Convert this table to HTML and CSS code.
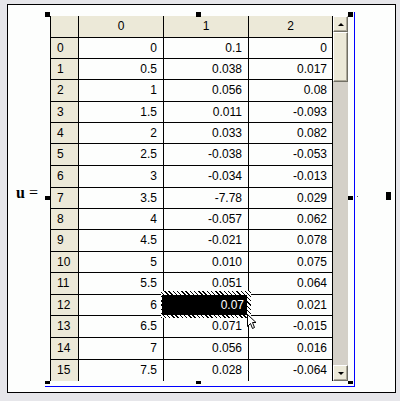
FILE: index.html
```html
<!DOCTYPE html>
<html>
<head>
<meta charset="utf-8">
<link rel="stylesheet" href="styles.css">
</head>
<body>
<div class="panel">
  <div class="label"><b>u</b> =</div>
  <div class="region">
    <span class="h h-tl"></span><span class="h h-tc"></span><span class="h h-tr"></span>
    <span class="h h-ml"></span><span class="h h-mr"></span>
    <span class="h h-b h-bl"></span><span class="h h-b h-bc"></span><span class="h h-b h-br"></span>
    <div class="widget">
      <div class="sheet">
        <div class="c hd"></div><div class="c hd">0</div><div class="c hd">1</div><div class="c hd">2</div>
        <div class="c rh">0</div><div class="c">0</div><div class="c">0.1</div><div class="c c2">0</div>
        <div class="c rh">1</div><div class="c">0.5</div><div class="c">0.038</div><div class="c c2">0.017</div>
        <div class="c rh">2</div><div class="c">1</div><div class="c">0.056</div><div class="c c2">0.08</div>
        <div class="c rh">3</div><div class="c">1.5</div><div class="c">0.011</div><div class="c c2">-0.093</div>
        <div class="c rh">4</div><div class="c">2</div><div class="c">0.033</div><div class="c c2">0.082</div>
        <div class="c rh">5</div><div class="c">2.5</div><div class="c">-0.038</div><div class="c c2">-0.053</div>
        <div class="c rh">6</div><div class="c">3</div><div class="c">-0.034</div><div class="c c2">-0.013</div>
        <div class="c rh">7</div><div class="c">3.5</div><div class="c">-7.78</div><div class="c c2">0.029</div>
        <div class="c rh">8</div><div class="c">4</div><div class="c">-0.057</div><div class="c c2">0.062</div>
        <div class="c rh">9</div><div class="c">4.5</div><div class="c">-0.021</div><div class="c c2">0.078</div>
        <div class="c rh">10</div><div class="c">5</div><div class="c">0.010</div><div class="c c2">0.075</div>
        <div class="c rh">11</div><div class="c">5.5</div><div class="c">0.051</div><div class="c c2">0.064</div>
        <div class="c rh">12</div><div class="c">6</div><div class="c cur"><div class="sel"><div class="sel-in">0.07</div></div><svg class="cursor" width="10" height="17" viewBox="0 0 10 17"><path d="M0.5 0.5 L0.5 12.5 L3.5 9.5 L5.5 14.5 L7.5 13.5 L5.5 8.5 L9 8.5 Z" fill="#fff" stroke="#000" stroke-width="1"/></svg></div><div class="c c2">0.021</div>
        <div class="c rh">13</div><div class="c">6.5</div><div class="c">0.071</div><div class="c c2">-0.015</div>
        <div class="c rh">14</div><div class="c">7</div><div class="c">0.056</div><div class="c c2">0.016</div>
        <div class="c rh">15</div><div class="c">7.5</div><div class="c">0.028</div><div class="c c2">-0.064</div>
      </div>
      <div class="scroll">
        <div class="sb-btn"><span class="arr-up"></span></div>
        <div class="thumb"></div>
        <div class="track"></div>
        <div class="sb-btn"><span class="arr-down"></span></div>
      </div>
    </div>
  </div>
  <span class="dot"></span>
  <span class="mark"></span>
</div>
</body>
</html>
```
FILE: styles.css
```css
html, body {
  margin: 0;
  padding: 0;
}
body {
  background: #e6e6ea;
  width: 400px;
  height: 401px;
  overflow: hidden;
}
.panel {
  margin: 4px 0 0 7px;
  width: 387px;
  height: 387px;
  border: 1px solid #000;
  background: #fdfefd;
  position: relative;
  display: flex;
  align-items: flex-start;
}
.label {
  margin: 179px 0 0 8px;
  width: 29px;
  font: 16px/18px "Liberation Serif", serif;
  color: #000;
  white-space: nowrap;
}
.region {
  position: relative;
  margin-top: 7px;
  padding: 4px 6px 5px 5px;
  border-right: 1px solid #0000ff;
  border-bottom: 1px solid #0000ff;
}
.h {
  position: absolute;
  width: 5px;
  height: 5px;
  background: #000;
  z-index: 3;
}
.h-tl { left: 0; top: 0; }
.h-tc { left: 151px; top: 0; }
.h-tr { left: 303px; top: 0; }
.h-ml { left: 0; top: 184px; height: 4px; }
.h-mr { left: 303px; top: 184px; height: 4px; }
.h-b { top: 369px; height: 3px; }
.h-bl { left: 0; }
.h-bc { left: 151px; }
.h-br { left: 303px; }
.widget {
  display: flex;
  width: 298px;
  height: 365px;
}
.sheet {
  display: grid;
  grid-template-columns: 28px 85px 85px 84px;
  grid-template-rows: 22px 21px 21px 22px 21px 21px 22px 22px 21px 21px 22px 21px 22px 21px 22px 22px 22px;
  border-left: 1px solid #000;
  height: 365px;
  overflow: hidden;
  font: 12px/20px "Liberation Sans", Arial, sans-serif;
  color: #000;
  background: #fdfefd;
}
.c {
  box-sizing: border-box;
  border-right: 1px solid #000;
  border-bottom: 1px solid #000;
  text-align: right;
  padding-right: 6px;
  white-space: nowrap;
}
.c2 { padding-right: 5px; }
.hd {
  background: #ece9d8;
  text-align: center;
  padding: 0;
}
.rh {
  background: #ece9d8;
  text-align: left;
  padding: 0 0 0 6px;
}
.cur {
  position: relative;
}
.sel {
  position: absolute;
  left: -3px;
  right: -3px;
  top: -4px;
  bottom: -3px;
  padding: 4px;
  background: repeating-linear-gradient(45deg, #000 0 1px, #fff 1px 3px);
  z-index: 2;
}
.sel-in {
  background: #000;
  color: #fff;
  height: 20px;
  box-sizing: border-box;
  margin-left: -3px;
  padding-right: 3px;
  text-align: right;
}
.cursor {
  position: absolute;
  left: 83px;
  top: 19px;
  z-index: 4;
}
.scroll {
  width: 15px;
  display: flex;
  flex-direction: column;
  background: #d4d0c8;
}
.sb-btn, .thumb {
  box-sizing: border-box;
  background: #ece9d8;
  border: 1px solid;
  border-color: #fff #716f64 #716f64 #fff;
  box-shadow: inset -1px -1px 0 #aca899;
}
.sb-btn {
  height: 16px;
  display: flex;
  align-items: center;
  justify-content: center;
}
.thumb {
  height: 50px;
}
.track {
  flex: 1;
}
.arr-up, .arr-down {
  width: 0;
  height: 0;
  border-left: 3px solid transparent;
  border-right: 3px solid transparent;
}
.arr-up { border-bottom: 3px solid #000; }
.arr-down { border-top: 3px solid #000; }
.dot {
  position: absolute;
  left: 349px;
  top: 191px;
  width: 1px;
  height: 1px;
  background: #555;
}
.mark {
  position: absolute;
  left: 378px;
  top: 187px;
  width: 5px;
  height: 8px;
  background: #000;
}
```
